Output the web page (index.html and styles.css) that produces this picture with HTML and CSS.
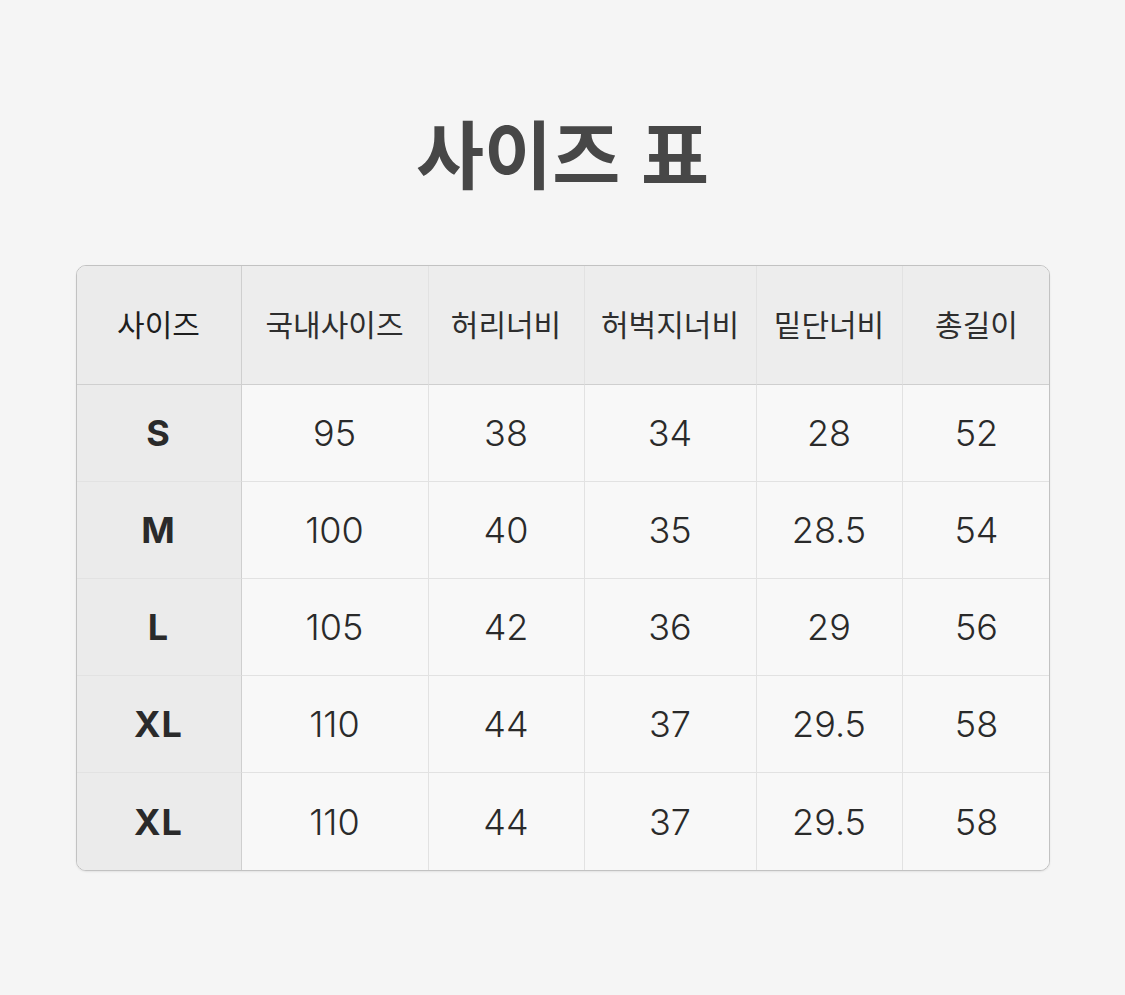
FILE: index.html
```html
<!DOCTYPE html>
<html lang="ko">
<head>
<meta charset="utf-8">
<link rel="stylesheet" href="styles.css">
</head>
<body>
<div class="page">
  <h1 class="title">사이즈 표</h1>
  <div class="table">
    <div class="cell head first">사이즈</div>
    <div class="cell head">국내사이즈</div>
    <div class="cell head">허리너비</div>
    <div class="cell head">허벅지너비</div>
    <div class="cell head">밑단너비</div>
    <div class="cell head last">총길이</div>

    <div class="cell size">S</div>
    <div class="cell">95</div><div class="cell">38</div><div class="cell">34</div><div class="cell">28</div><div class="cell last">52</div>

    <div class="cell size">M</div>
    <div class="cell">100</div><div class="cell">40</div><div class="cell">35</div><div class="cell">28.5</div><div class="cell last">54</div>

    <div class="cell size">L</div>
    <div class="cell">105</div><div class="cell">42</div><div class="cell">36</div><div class="cell">29</div><div class="cell last">56</div>

    <div class="cell size">XL</div>
    <div class="cell">110</div><div class="cell">44</div><div class="cell">37</div><div class="cell">29.5</div><div class="cell last">58</div>

    <div class="cell size bottom">XL</div>
    <div class="cell bottom">110</div><div class="cell bottom">44</div><div class="cell bottom">37</div><div class="cell bottom">29.5</div><div class="cell last bottom">58</div>
  </div>
</div>
</body>
</html>
```
FILE: styles.css
```css
html, body {
  margin: 0;
  padding: 0;
  background: #f5f5f5;
}
.page {
  width: 1125px;
  height: 995px;
  display: flex;
  flex-direction: column;
  align-items: center;
  font-family: Inter, "Noto Sans CJK KR", sans-serif;
  color: #333;
}
.title {
  margin: 100px 0 0 0;
  height: 101px;
  font-family: "Noto Sans CJK KR", sans-serif;
  font-weight: 700;
  font-size: 74px;
  line-height: 101px;
  color: #474747;
  letter-spacing: 0;
}
.table {
  margin-top: 64px;
  width: 974px;
  display: grid;
  grid-template-columns: 165px 187px 156px 172px 146px 148px;
  grid-template-rows: 119px repeat(5, 97px);
  border: 1px solid #c2c2c2;
  border-radius: 10px;
  overflow: hidden;
  box-sizing: border-box;
  background: #f8f8f8;
  box-shadow: 0 1px 2px rgba(0,0,0,0.08);
}
.cell {
  display: flex;
  align-items: center;
  justify-content: center;
  border-right: 1px solid #e2e2e2;
  border-bottom: 1px solid #e2e2e2;
  font-size: 36px;
  font-weight: 350;
  color: #2a2a2a;
  background: #f8f8f8;
}
.cell.last { border-right: none; }
.cell.bottom { border-bottom: none; }
.cell.head {
  background: #ededed;
  font-family: "Noto Sans CJK KR", sans-serif;
  font-size: 30px;
  font-weight: 400;
  color: #2e2e2e;
  border-bottom: 1px solid #cfcfcf;
  padding-bottom: 4px;
  box-sizing: border-box;
}
.cell.head.first {
  color: #1e1e1e;
}
.cell.first, .cell.size {
  border-right: 1px solid #cfcfcf;
  background: #ebebeb;
}
.cell.size {
  font-weight: 700;
  font-size: 36px;
  letter-spacing: 1px;
  color: #2a2a2a;
}
```
